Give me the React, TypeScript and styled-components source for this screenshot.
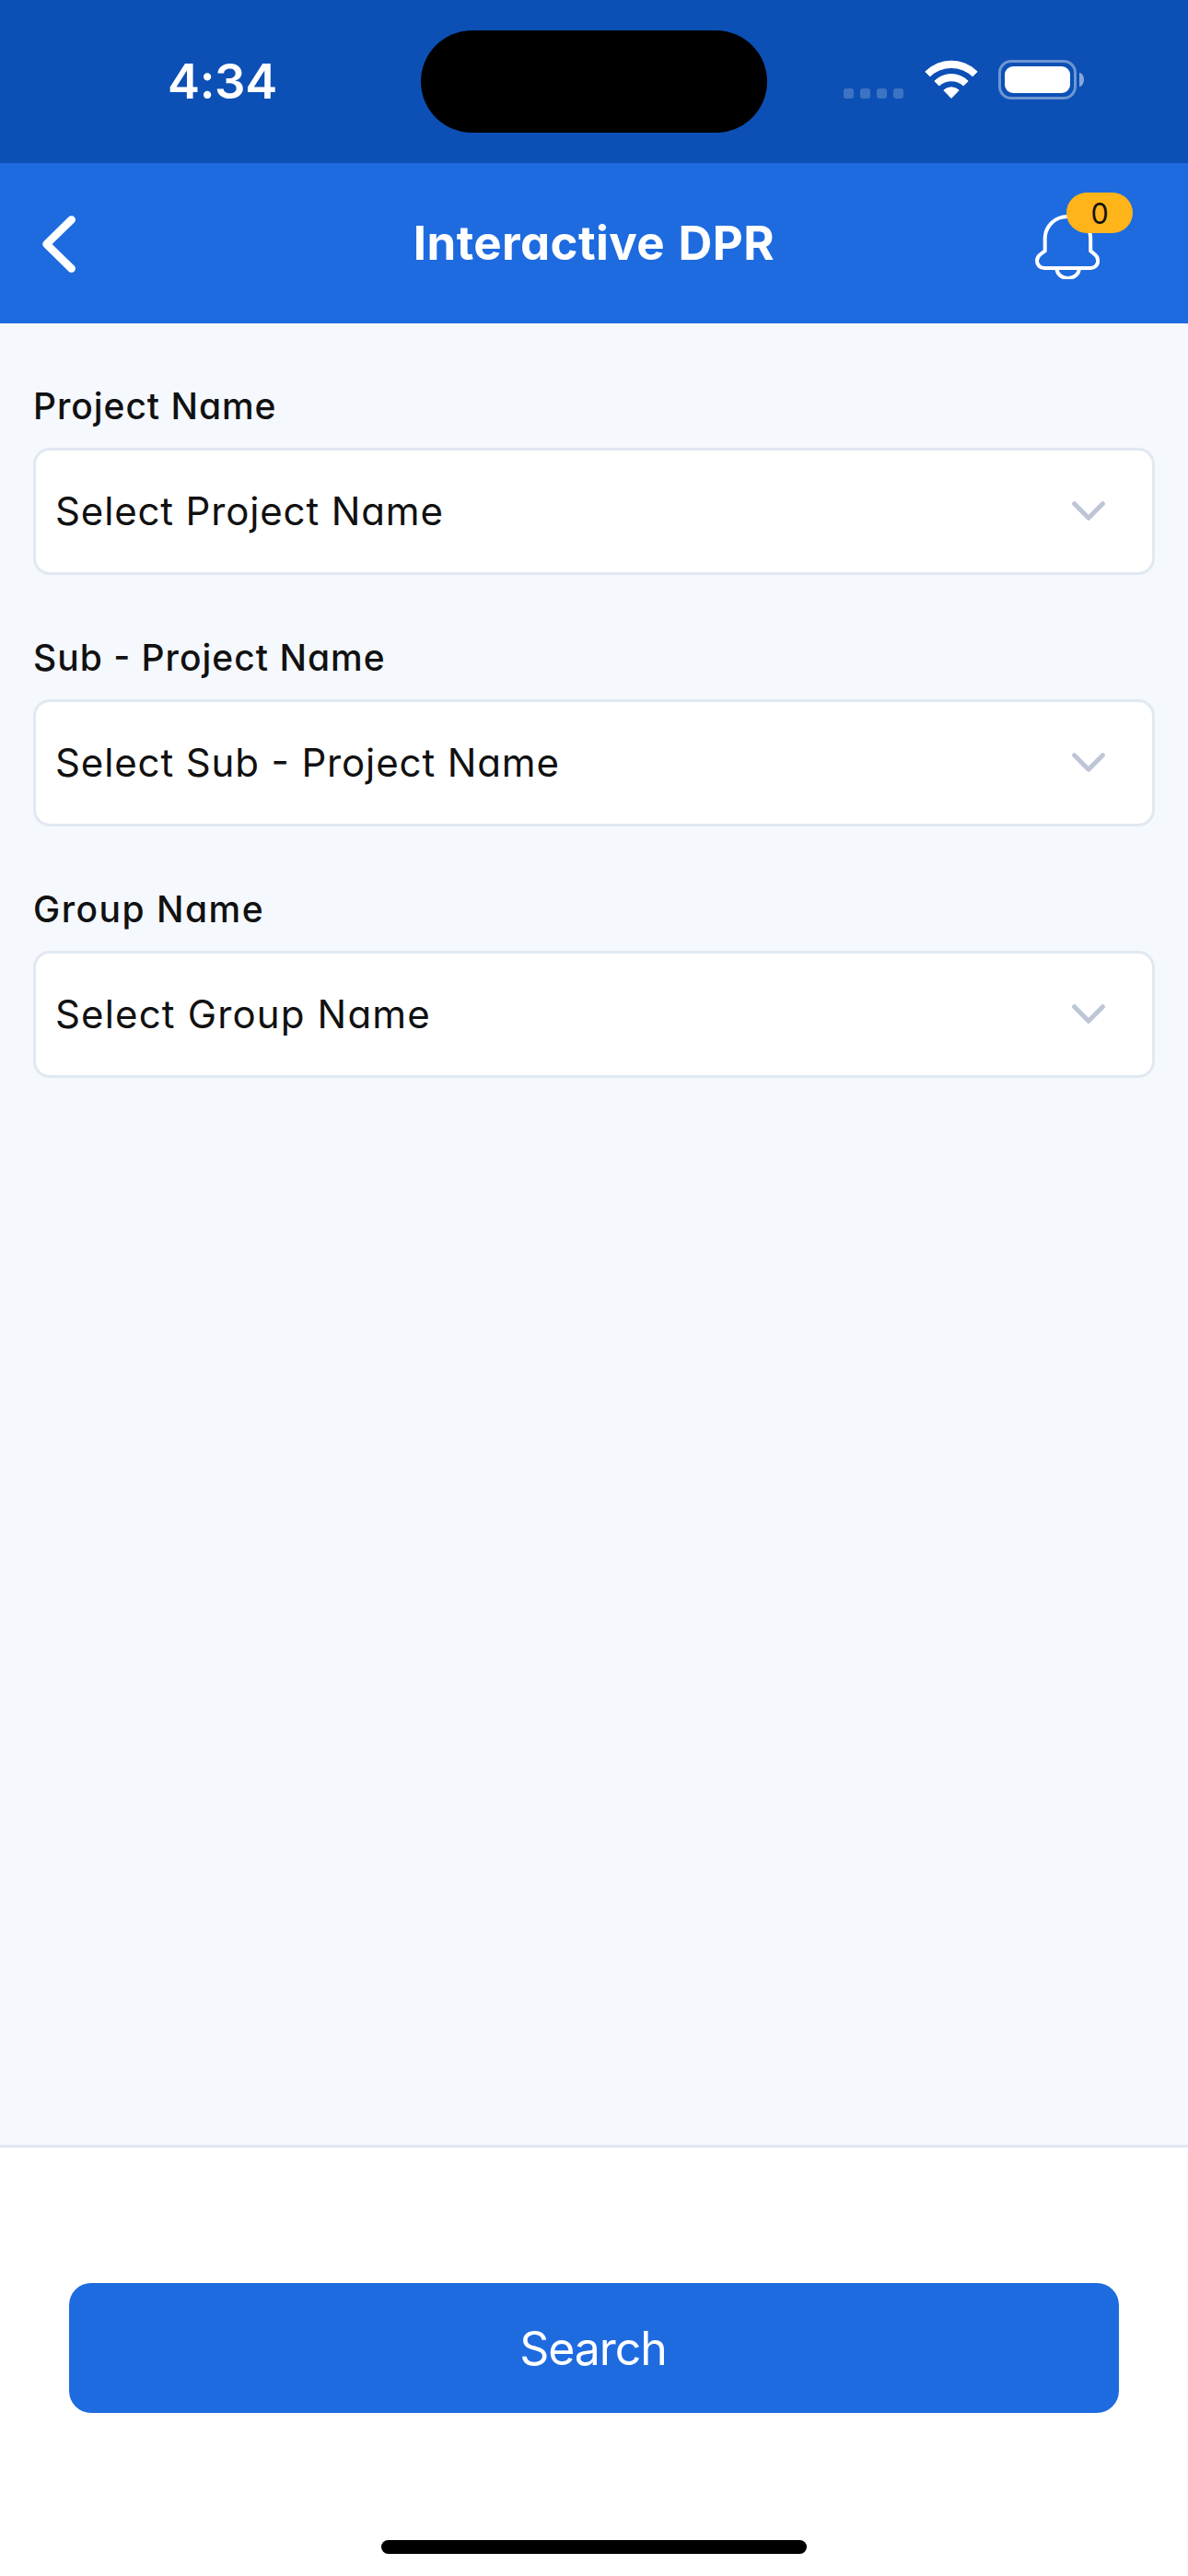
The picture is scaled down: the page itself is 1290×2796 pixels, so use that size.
import React from "react";
import styled, { createGlobalStyle } from "styled-components";

const GlobalStyle = createGlobalStyle`
  *, *::before, *::after { box-sizing: border-box; }
  html, body { margin: 0; padding: 0; }
  body { font-family: Inter, "Liberation Sans", sans-serif; color: #111; }
`;

const Screen = styled.div`
  display: flex;
  flex-direction: column;
  width: 1290px;
  height: 2796px;
  background: #f5f8fd;
  overflow: hidden;
`;

const StatusBar = styled.div`
  display: grid;
  grid-template-columns: 457px 376px 1fr;
  flex: none;
  height: 177px;
  background: #0c50b5;
`;

const Time = styled.div`
  padding: 56px 0 0 182px;
  font-size: 52.5px;
  font-weight: 600;
  line-height: 64px;
  letter-spacing: -0.3px;
  color: #fff;
`;

const Island = styled.div`
  height: 111px;
  margin-top: 33px;
  border-radius: 56px;
  background: #000;
`;

const Indicators = styled.div`
  display: flex;
  align-items: flex-start;
  padding: 65px 0 0 83px;
`;

const SignalDots = styled.div`
  display: flex;
  gap: 7px;
  margin: 31px 23px 0 0;
`;

const SignalDot = styled.span`
  width: 11px;
  height: 11px;
  border-radius: 3px;
  background: rgba(255, 255, 255, 0.2);
`;

const Battery = styled.div`
  display: flex;
  align-items: center;
  gap: 3px;
  margin-left: 22px;
`;

const BatteryShell = styled.div`
  width: 85px;
  height: 43px;
  padding: 4px;
  border: 3px solid rgba(255, 255, 255, 0.4);
  border-radius: 14px;
`;

const BatteryLevel = styled.div`
  height: 29px;
  border-radius: 9px;
  background: #fff;
`;

const BatteryCap = styled.div`
  width: 5px;
  height: 15px;
  border-radius: 0 5px 5px 0 / 0 7.5px 7.5px 0;
  background: rgba(255, 255, 255, 0.5);
`;

const Header = styled.header`
  display: grid;
  grid-template-columns: 300px 1fr 300px;
  flex: none;
  height: 174px;
  background: #1e6be0;
`;

const BackButton = styled.button`
  display: flex;
  padding: 57px 0 0 46px;
  border: 0;
  background: none;
`;

const Title = styled.h1`
  margin: 0;
  padding-top: 54px;
  font-size: 51px;
  font-weight: 650;
  line-height: 66px;
  letter-spacing: 0.4px;
  word-spacing: 2px;
  text-align: center;
  white-space: nowrap;
  font-feature-settings: "cv11";
  color: #fff;
`;

const BellButton = styled.div`
  position: relative;
  width: 70px;
  height: 70px;
  margin: 56px 0 0 134px;
`;

const Badge = styled.span`
  position: absolute;
  left: 34px;
  top: -24px;
  width: 72px;
  height: 44px;
  border-radius: 22px;
  background: #ffb41a;
  font-size: 30.5px;
  line-height: 45px;
  text-align: center;
  color: #111;
`;

const Form = styled.main`
  display: flex;
  flex-direction: column;
  flex: 1;
  gap: 65px;
  padding: 65px 36px 0;
`;

const Field = styled.div`
  display: flex;
  flex-direction: column;
`;

const Label = styled.label<{ $tracking: number }>`
  height: 70px;
  font-size: 39px;
  font-weight: 500;
  line-height: 50px;
  letter-spacing: ${(p) => p.$tracking}px;
  font-feature-settings: "cv11", "case";
`;

const SelectBox = styled.div`
  display: flex;
  align-items: center;
  justify-content: space-between;
  height: 138px;
  padding: 0 51px 0 21px;
  border: 3px solid #e1e8f1;
  border-radius: 18px;
  background: #fff;
`;

const SelectText = styled.span<{ $tracking: number }>`
  font-size: 42px;
  line-height: 60px;
  letter-spacing: ${(p) => p.$tracking}px;
  font-feature-settings: "cv11", "case";
`;

const Footer = styled.footer`
  display: flex;
  flex-direction: column;
  align-items: center;
  flex: none;
  height: 468px;
  padding-top: 147px;
  border-top: 3px solid #e1e8f1;
  background: #fff;
`;

const SearchButton = styled.button`
  width: 1140px;
  height: 141px;
  padding: 0 2px 0 0;
  border: 0;
  border-radius: 24px;
  background: #1e6be0;
  font-family: inherit;
  font-size: 50px;
  letter-spacing: -1.1px;
  line-height: 60px;
  color: #fff;
`;

const HomeIndicator = styled.div`
  width: 462px;
  height: 15px;
  margin-top: 138px;
  border-radius: 8px;
  background: #000;
`;

const WifiIcon = () => (
  <svg width="58" height="43" viewBox="0 0 58 43" fill="#fff" stroke="#fff" strokeWidth="1" strokeLinejoin="round">
    <path d="M0.8 12.8A40 40 0 0 1 57.2 12.8L52.2 17.8A33.5 33.5 0 0 0 5.8 17.8Z" />
    <path d="M10.8 23A26 26 0 0 1 47.2 23L42.2 28A19.3 19.3 0 0 0 15.8 28Z" />
    <path d="M20.8 33A12.2 12.2 0 0 1 37.2 33L29 41.4Z" />
  </svg>
);

const BackIcon = () => (
  <svg width="36" height="62" viewBox="0 0 36 62" fill="none" stroke="#fff" strokeWidth="8.5" strokeLinecap="round" strokeLinejoin="round">
    <path d="M31.7 4.4L4.5 31L31.7 57.6" />
  </svg>
);

const BellIcon = () => (
  <svg width="70" height="70" viewBox="0 0 70 70" fill="none" stroke="#fff" strokeWidth="4" strokeLinejoin="round">
    <path d="M10.7 39.4V26.5C10.7 12.5 21.5 2 35.4 2S60.2 12.5 60.2 26.5V39.4L65.2 43.5C67.2 45.3 68.2 47.5 68.2 50C68.2 54.6 64.9 58 60.4 58H10C5.4 58 2 54.6 2 50C2 47.5 3.2 45.3 5.2 43.5Z" />
    <path d="M23.3 58.5C24 64.6 28.8 68.9 35.6 68.9S47.3 64.6 48 58.5" />
  </svg>
);

const ChevronIcon = () => (
  <svg width="36" height="22" viewBox="0 0 36 22" fill="none" stroke="#bec6d6" strokeWidth="5" strokeLinecap="round" strokeLinejoin="round">
    <path d="M2.6 2.7L18 18.3L33.4 2.7" />
  </svg>
);

const fields = [
  { label: "Project Name", labelTracking: 0.95, value: "Select Project Name", valueTracking: 0.85 },
  { label: "Sub - Project Name", labelTracking: 1, value: "Select Sub - Project Name", valueTracking: 0.87 },
  { label: "Group Name", labelTracking: 1.5, value: "Select Group Name", valueTracking: 1.15 },
];

export default function App() {
  return (
    <>
      <GlobalStyle />
      <Screen>
        <StatusBar>
          <Time>4:34</Time>
          <Island />
          <Indicators>
            <SignalDots>
              {[0, 1, 2, 3].map((i) => (
                <SignalDot key={i} />
              ))}
            </SignalDots>
            <WifiIcon />
            <Battery>
              <BatteryShell>
                <BatteryLevel />
              </BatteryShell>
              <BatteryCap />
            </Battery>
          </Indicators>
        </StatusBar>
        <Header>
          <BackButton aria-label="Back">
            <BackIcon />
          </BackButton>
          <Title>Interactive DPR</Title>
          <BellButton>
            <BellIcon />
            <Badge>0</Badge>
          </BellButton>
        </Header>
        <Form>
          {fields.map((f) => (
            <Field key={f.label}>
              <Label $tracking={f.labelTracking}>{f.label}</Label>
              <SelectBox>
                <SelectText $tracking={f.valueTracking}>{f.value}</SelectText>
                <ChevronIcon />
              </SelectBox>
            </Field>
          ))}
        </Form>
        <Footer>
          <SearchButton>Search</SearchButton>
          <HomeIndicator />
        </Footer>
      </Screen>
    </>
  );
}
